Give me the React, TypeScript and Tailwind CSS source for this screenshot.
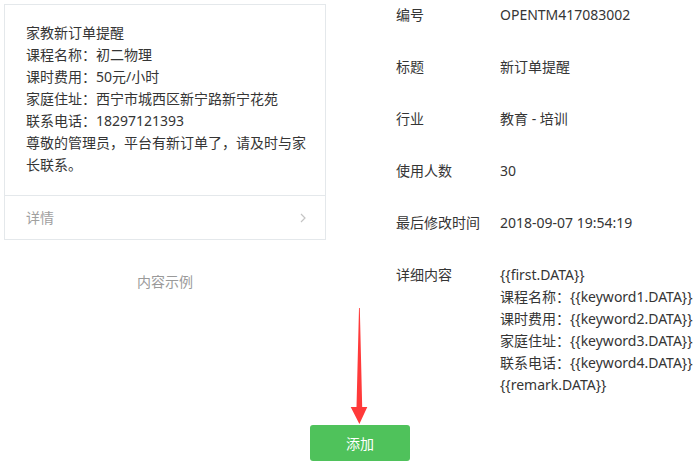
import React from 'react';

const FONT = "font-['Noto_Sans','Noto_Sans_CJK_SC',sans-serif]";

const previewLines = [
  '家教新订单提醒',
  '课程名称：初二物理',
  '课时费用：50元/小时',
  '家庭住址：西宁市城西区新宁路新宁花苑',
  '联系电话：18297121393',
  '尊敬的管理员，平台有新订单了，请及时与家长联系。',
];

const infoRows: { label: string; value: string }[] = [
  { label: '编号', value: 'OPENTM417083002' },
  { label: '标题', value: '新订单提醒' },
  { label: '行业', value: '教育 - 培训' },
  { label: '使用人数', value: '30' },
  { label: '最后修改时间', value: '2018-09-07 19:54:19' },
];

const detailLines = [
  '{{first.DATA}}',
  '课程名称：{{keyword1.DATA}}',
  '课时费用：{{keyword2.DATA}}',
  '家庭住址：{{keyword3.DATA}}',
  '联系电话：{{keyword4.DATA}}',
  '{{remark.DATA}}',
];

// -- Preview card on the left --
function PreviewCard() {
  return (
    <div className="w-[322px]">
      <div className="border border-[#e4e8eb] bg-white">
        <div className="pl-[21px] pr-[17px] pt-[17px] pb-[19px] text-[14px] leading-[22px] text-[#353535]">
          {previewLines.map((line) => (
            <p key={line}>{line}</p>
          ))}
        </div>
        <div className="flex h-[44px] items-center justify-between border-t border-[#e4e8eb] pl-[21px] pr-[19px] text-[14px] leading-[22px] text-[#a0a0a0]">
          <span>详情</span>
          <svg width="6" height="10" viewBox="0 0 6 10" fill="none">
            <polyline points="1,1 5,5 1,9" stroke="#c4c4c4" strokeWidth="1.2" />
          </svg>
        </div>
      </div>
      <p className="mt-[31px] text-center text-[14px] leading-[22px] text-[#9a9a9a]">内容示例</p>
    </div>
  );
}

// -- Template info on the right --
function InfoTable() {
  return (
    <div className="ml-[70px] pt-[4px] text-[14px] leading-[22px] text-[#353535]">
      {infoRows.map((row) => (
        <div key={row.label} className="mb-[30px] flex">
          <span className="w-[104px] shrink-0">{row.label}</span>
          <span className="whitespace-nowrap">{row.value}</span>
        </div>
      ))}
      <div className="flex">
        <span className="w-[104px] shrink-0">详细内容</span>
        <div className="whitespace-nowrap">
          {detailLines.map((line) => (
            <p key={line}>{line}</p>
          ))}
        </div>
      </div>
    </div>
  );
}

export default function App() {
  return (
    <div className={`relative h-[467px] w-[697px] overflow-hidden bg-white ${FONT}`}>
      <div className="flex">
        <div className="pl-[4px] pt-[4px]">
          <PreviewCard />
        </div>
        <InfoTable />
      </div>

      <div className="ml-[310px] mt-[29px]">
        <button className="h-[36px] w-[100px] rounded-[3px] bg-[#4fc25b] text-[14px] text-white">
          添加
        </button>
      </div>

      {/* annotation arrow */}
      <svg
        className="absolute left-[349px] top-[306px]"
        width="20"
        height="120"
        viewBox="0 0 20 120"
      >
        <polygon points="10,2 10.8,2 13.2,101 18.3,101 10.4,118 1.7,101 7.5,101" fill="#ff3a3a" />
      </svg>
    </div>
  );
}
